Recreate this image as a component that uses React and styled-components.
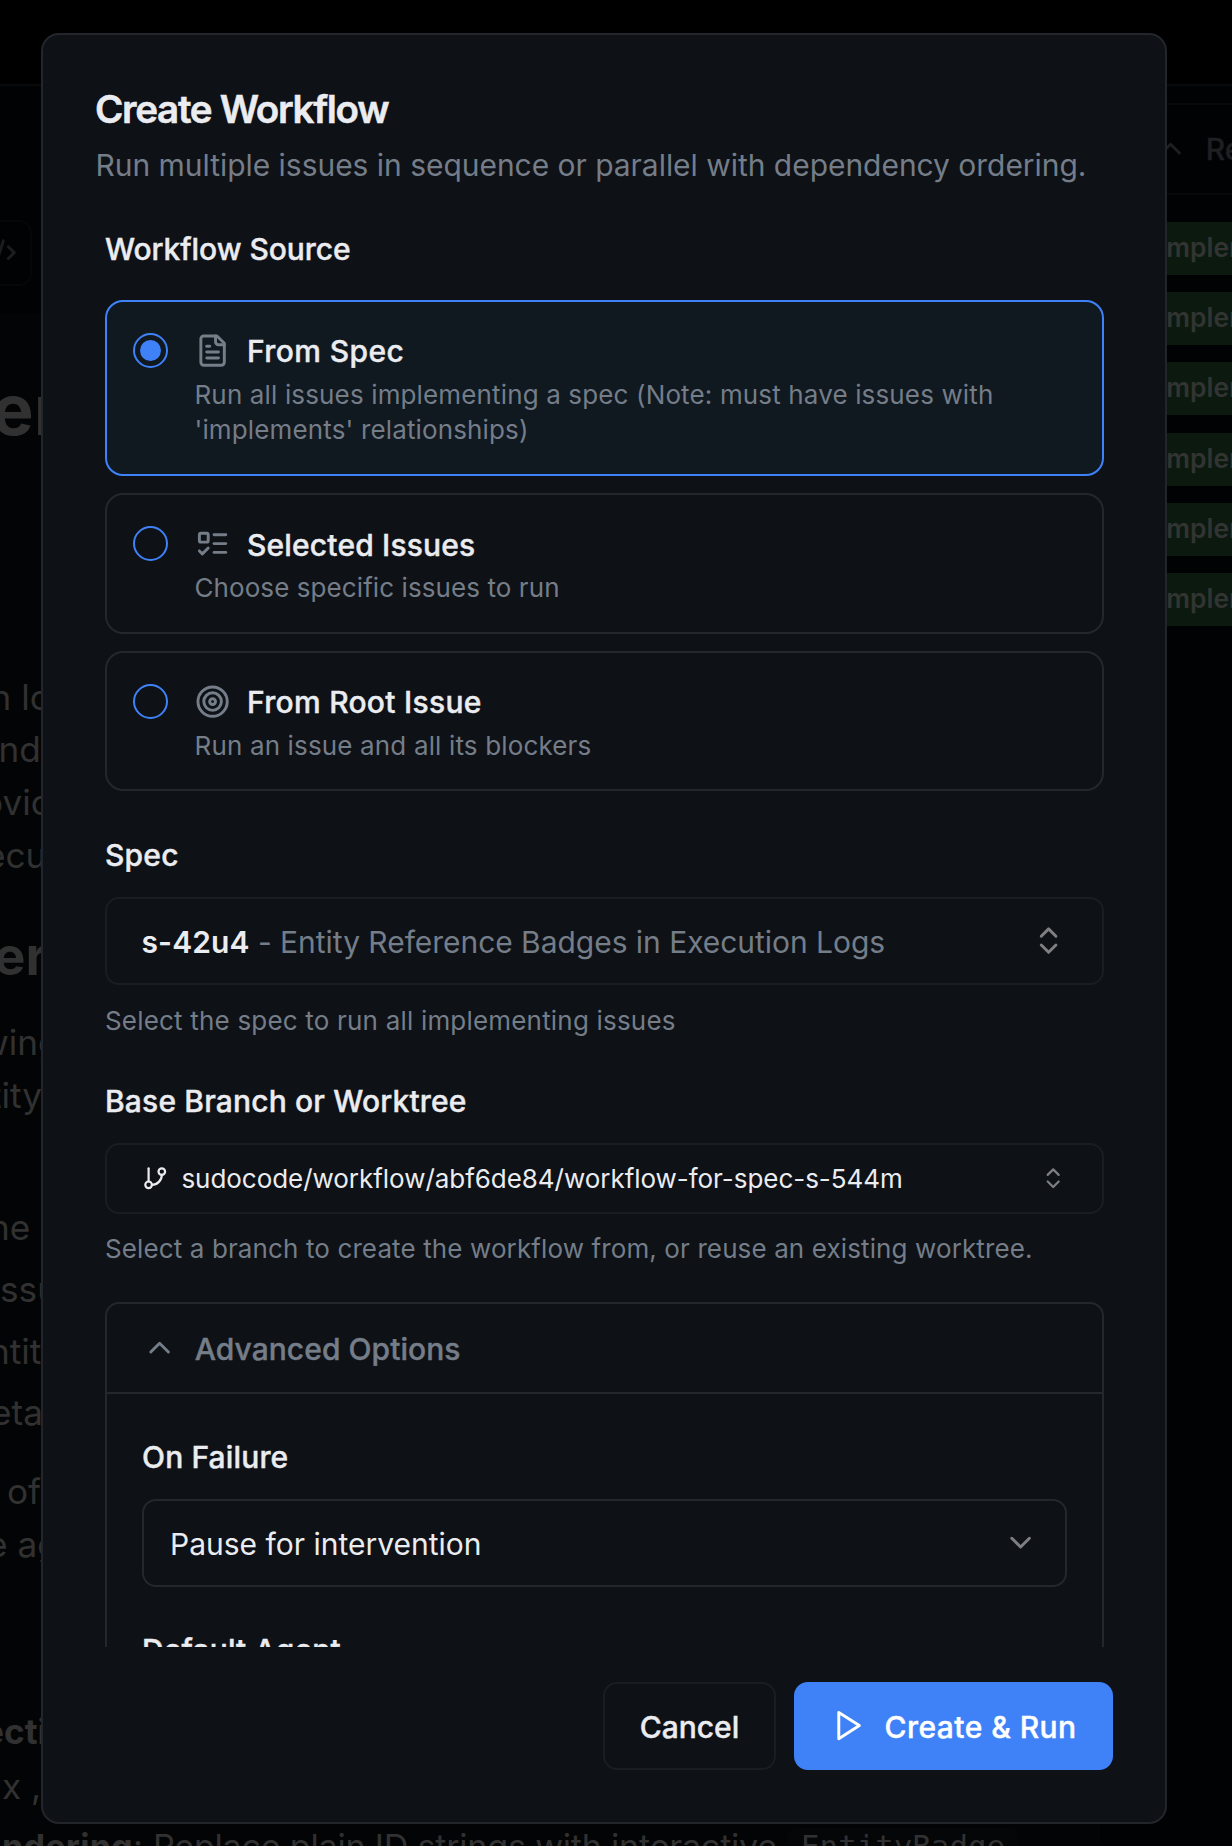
import React from "react";
import styled, { createGlobalStyle, css } from "styled-components";

const colors = {
  surface: "#0e1116",
  selected: "#101820",
  border: "#24272c",
  faint: "#1a1d22",
  text: "#ebecf0",
  muted: "#747d88",
  blue: "#3f82f8",
  ghost: "#313131",
};

const GlobalStyle = createGlobalStyle`
  *, *::before, *::after { box-sizing: border-box; }
  html, body { margin: 0; padding: 0; background: #010203; }
  body { font-family: Inter, "Liberation Sans", sans-serif; overflow: hidden; }
  button { font-family: inherit; }
  svg { flex: none; display: block; }
`;

const medium = css`
  font-weight: 500;
  -webkit-text-stroke: 0.4px currentColor;
`;

/* ---------- page behind the dialog ---------- */

const Page = styled.div`
  height: 1846px;
  overflow: hidden;
  display: flex;
  flex-direction: column;
  background: #010203;
`;

const TopBar = styled.div`
  height: 86px;
  flex: none;
  background: #000001;
  border-bottom: 2px solid #08090a;
`;

const Columns = styled.div`
  flex: 1;
  min-height: 0;
  display: flex;
  justify-content: space-between;
`;

const DocColumn = styled.div`
  width: 1100px;
  height: 1760px;
  overflow: hidden;
`;

const DocToolbar = styled.div`
  height: 227px;
  padding-top: 134px;
  background: #010203;
`;

const CodeToggle = styled.div`
  width: 64px;
  height: 66px;
  margin-left: -32.5px;
  padding-left: 12px;
  display: flex;
  align-items: center;
  border: 2px solid #060708;
  border-radius: 13px;
  color: #1d1d1d;
`;

const DocBody = styled.div`
  height: 1533px;
  padding-top: 1px;
  overflow: hidden;
  background: #030405;
`;

const DocLine = styled.div`
  height: 52px;
  margin-top: ${(p) => p.$gap}px;
  padding-left: 40px;
  text-indent: ${(p) => p.$x - 40}px;
  font-size: 35.2px;
  line-height: 52px;
  font-weight: ${(p) => (p.$bold ? 700 : 400)};
  color: ${colors.ghost};
  white-space: pre;
`;

const DocHeading = styled(DocLine)`
  height: ${(p) => p.$height}px;
  line-height: ${(p) => p.$height}px;
  font-size: ${(p) => p.$size}px;
  font-weight: 700;
`;

const DocRichLine = styled.div`
  display: flex;
  align-items: center;
  height: 52px;
  margin-top: 8px;
  font-size: 34.2px;
  letter-spacing: -0.26px;
  color: ${colors.ghost};
  white-space: pre;
`;

const Lead = styled.span`
  display: flex;
  justify-content: flex-end;
  width: 143px;
  margin-right: 10px;
  letter-spacing: 0.2px;
`;

const CodeChip = styled.code`
  margin-left: 11px;
  padding: 0 13px;
  border-radius: 8px;
  background: #050607;
  font: 30.8px "DejaVu Sans Mono", monospace;
  letter-spacing: 0;
`;

const SidePanel = styled.div`
  width: 92px;
  height: 545px;
  margin-top: 17px;
  border-top: 2px solid #08090a;
  overflow: hidden;
`;

const SideHeader = styled.div`
  height: 90px;
  padding-left: 13px;
  display: flex;
  align-items: center;
  gap: 17.5px;
  border-bottom: 2px solid #08090a;
  font-size: 30px;
  ${medium}
  color: #1e1f20;
`;

const BadgeList = styled.div`
  display: flex;
  flex-direction: column;
  gap: 17.2px;
  padding-top: 27px;
`;

const Badge = styled.div`
  height: 53px;
  padding-left: 19px;
  line-height: 51.6px;
  background: #0c190e;
  color: #313432;
  font-size: 26.4px;
  font-weight: 600;
`;

/* ---------- dialog ---------- */

const Overlay = styled.div`
  position: fixed;
  inset: 0;
  padding: 33px 65px 22px 41px;
`;

const Dialog = styled.div`
  width: 1126px;
  height: 1791px;
  padding: 50px 52px 0 52px;
  display: flex;
  flex-direction: column;
  background: ${colors.surface};
  border: 2px solid #22252c;
  border-radius: 18px;
  color: ${colors.text};
`;

const Title = styled.h2`
  margin: 0;
  font-size: 38.6px;
  line-height: 48px;
  font-weight: 600;
  letter-spacing: -1.33px;
  -webkit-text-stroke: 0.5px currentColor;
`;

const Description = styled.p`
  margin: 10px 0 0;
  padding-left: 0.5px;
  font-size: 30px;
  line-height: 44px;
  letter-spacing: -0.035px;
  color: ${colors.muted};
  white-space: nowrap;
`;

const ScrollBody = styled.div`
  height: 1460px;
  flex: none;
  padding: 40px 9px 0 10px;
  overflow: hidden;
`;

const Label = styled.div`
  height: 44px;
  margin-top: ${(p) => p.$gap || 0}px;
  font-size: 30px;
  line-height: 44px;
  letter-spacing: ${(p) => p.$track || 0}px;
  ${medium}
`;

const Hint = styled.div`
  height: 36px;
  margin-top: ${(p) => p.$gap}px;
  font-size: 26px;
  line-height: 38px;
  letter-spacing: ${(p) => p.$track}px;
  color: ${colors.muted};
  white-space: nowrap;
`;

const OptionList = styled.div`
  display: flex;
  flex-direction: column;
  gap: 17px;
  margin-top: 29px;
`;

const OptionCard = styled.div`
  height: ${(p) => p.$height}px;
  display: flex;
  gap: 26.5px;
  padding: 26.5px 26px;
  border: 2px solid ${(p) => (p.$active ? colors.blue : colors.border)};
  background: ${(p) => (p.$active ? colors.selected : "transparent")};
  border-radius: 18px;
`;

const Radio = styled.span`
  width: 35px;
  height: 35px;
  flex: none;
  margin-top: 4.5px;
  display: flex;
  align-items: center;
  justify-content: center;
  border: 2px solid ${colors.blue};
  border-radius: 50%;
  ${(p) =>
    p.$checked &&
    css`
      &::after {
        content: "";
        width: 21px;
        height: 21px;
        border-radius: 50%;
        background: ${colors.blue};
      }
    `}
`;

const OptionHead = styled.div`
  display: flex;
  align-items: center;
  gap: 17.3px;
  height: 44px;
  color: ${colors.muted};
`;

const OptionTitle = styled.span`
  padding-top: ${(p) => p.$drop}px;
  font-size: 30px;
  line-height: 44px;
  ${medium}
  letter-spacing: ${(p) => p.$track}px;
  color: ${colors.text};
`;

const OptionText = styled.div`
  margin-top: 4.5px;
  font-size: 26px;
  line-height: 35px;
  letter-spacing: ${(p) => p.$track}px;
  color: ${colors.muted};
`;

const Combo = styled.button`
  width: 100%;
  height: ${(p) => p.$height}px;
  margin: ${(p) => p.$gap}px 0 0;
  padding: 0 36px 0 ${(p) => p.$left}px;
  display: flex;
  align-items: center;
  border: 2px solid ${colors.faint};
  border-radius: 14px;
  background: transparent;
  color: ${colors.text};
  font-size: ${(p) => p.$size}px;
  letter-spacing: -0.04px;
  text-align: left;
  white-space: pre;
`;

const ComboValue = styled.span`
  flex: 1;
  padding-top: ${(p) => p.$drop ?? 2}px;
  margin-left: ${(p) => p.$left || 0}px;
  b { font-weight: 600; letter-spacing: 0.1px; }
`;

const Dim = styled.span`
  color: ${colors.muted};
`;

const Half = styled.span`
  color: #7d7f82;
`;

const Advanced = styled.section`
  height: 600px;
  margin-top: 36px;
  border: 2px solid ${colors.border};
  border-radius: 14px;
`;

const AdvancedHead = styled.div`
  height: 90px;
  padding-left: 35px;
  display: flex;
  align-items: center;
  gap: 17.5px;
  border-bottom: 2px solid ${colors.border};
  color: ${colors.muted};
  font-size: 30px;
  line-height: 44px;
  letter-spacing: 0.05px;
  ${medium}
  span { padding-top: 2px; }
`;

const AdvancedBody = styled.div`
  padding: 40.5px 35px 0;
`;

const Select = styled(Combo)`
  border-color: ${colors.border};
  padding-right: 27px;
  letter-spacing: 0;
`;

const Footer = styled.div`
  margin-top: 35px;
  display: flex;
  justify-content: flex-end;
  gap: 18px;
`;

const Button = styled.button`
  width: ${(p) => p.$width}px;
  height: 88px;
  padding: 0;
  display: flex;
  align-items: center;
  justify-content: center;
  gap: 19px;
  border: 2px solid ${(p) => (p.$primary ? colors.blue : colors.faint)};
  border-radius: 14px;
  background: ${(p) => (p.$primary ? colors.blue : "transparent")};
  color: ${(p) => (p.$primary ? "#fff" : colors.text)};
  font-size: 30px;
  ${medium}
  letter-spacing: ${(p) => (p.$primary ? 0.45 : 0)}px;
  span { padding-top: 2px; }
`;

/* ---------- icons ---------- */

const Icon = ({ size = 35.2, children }) => (
  <svg
    width={size}
    height={size}
    viewBox="0 0 24 24"
    fill="none"
    stroke="currentColor"
    strokeWidth="2"
    strokeLinecap="round"
    strokeLinejoin="round"
  >
    {children}
  </svg>
);

const FileTextIcon = () => (
  <Icon>
    <path d="M15 2H6a2 2 0 0 0-2 2v16a2 2 0 0 0 2 2h12a2 2 0 0 0 2-2V7Z" />
    <path d="M14 2v4a2 2 0 0 0 2 2h4" />
    <path d="M10 9H8" />
    <path d="M16 13H8" />
    <path d="M16 17H8" />
  </Icon>
);

const ListTodoIcon = () => (
  <Icon>
    <rect x="3" y="5" width="6" height="6" rx="1" />
    <path d="m3 17 2 2 4-4" />
    <path d="M13 6h8" />
    <path d="M13 12h8" />
    <path d="M13 18h8" />
  </Icon>
);

const TargetIcon = () => (
  <Icon>
    <circle cx="12" cy="12" r="10" />
    <circle cx="12" cy="12" r="6" />
    <circle cx="12" cy="12" r="2" />
  </Icon>
);

const UpDownIcon = ({ size }) => (
  <Icon size={size}>
    <path d="m7 15 5 5 5-5" />
    <path d="m7 9 5-5 5 5" />
  </Icon>
);

const BranchIcon = () => (
  <Icon size={26.4}>
    <path d="M6 3v12" />
    <circle cx="18" cy="6" r="3" />
    <circle cx="6" cy="18" r="3" />
    <path d="M18 9a9 9 0 0 1-9 9" />
  </Icon>
);

const ChevronUpIcon = () => (
  <Icon>
    <path d="m18 15-6-6-6 6" />
  </Icon>
);

const ChevronDownIcon = () => (
  <Icon>
    <path d="m6 9 6 6 6-6" />
  </Icon>
);

const PlayIcon = () => (
  <Icon>
    <path d="m6 3 14 9-14 9Z" />
  </Icon>
);

const CodeIcon = () => (
  <Icon>
    <path d="m18 16 4-4-4-4" />
    <path d="m6 8-4 4 4 4" />
    <path d="m14.5 4-5 16" />
  </Icon>
);

/* ---------- content ---------- */

const options = [
  {
    title: "From Spec",
    track: 0.42,
    drop: 1,
    text: "Run all issues implementing a spec (Note: must have issues with 'implements' relationships)",
    textTrack: 0.14,
    icon: <FileTextIcon />,
    height: 176,
    active: true,
  },
  {
    title: "Selected Issues",
    track: 0.17,
    drop: 3,
    text: "Choose specific issues to run",
    textTrack: 0.08,
    icon: <ListTodoIcon />,
    height: 141,
  },
  {
    title: "From Root Issue",
    track: 0.29,
    drop: 1,
    text: "Run an issue and all its blockers",
    textTrack: 0.15,
    icon: <TargetIcon />,
    height: 140,
  },
];

const Backdrop = () => (
  <Page>
    <TopBar />
    <Columns>
      <DocColumn>
        <DocToolbar>
          <CodeToggle>
            <CodeIcon />
          </CodeToggle>
        </DocToolbar>
        <DocBody>
          <DocHeading $gap={56} $height={80} $size={70} $x={-8}>er</DocHeading>
          <DocLine $gap={221} $x={-9.5}>n lo</DocLine>
          <DocLine $gap={0} $x={-1.5}>nd</DocLine>
          <DocLine $gap={1} $x={-18}>ovic</DocLine>
          <DocLine $gap={1} $x={-15}>ecu</DocLine>
          <DocHeading $gap={45} $height={60} $size={52.8} $x={-6}>er</DocHeading>
          <DocLine $gap={30} $x={-20}>wing</DocLine>
          <DocLine $gap={1} $x={-10}>tity</DocLine>
          <DocLine $gap={80} $x={-11}>he</DocLine>
          <DocLine $gap={10} $x={0}>ssu</DocLine>
          <DocLine $gap={10} $x={-11}>ntit</DocLine>
          <DocLine $gap={9} $x={-9}>eta</DocLine>
          <DocLine $gap={27} $x={7}>of</DocLine>
          <DocLine $gap={1} $x={-13}>e ag</DocLine>
          <DocLine $gap={135} $x={-17} $bold>ecti</DocLine>
          <DocLine $gap={3} $x={2}>x ,</DocLine>
          <DocRichLine>
            <Lead>
              <b>ndering</b>:
            </Lead>
            Replace plain ID strings with interactive
            <CodeChip>EntityBadge</CodeChip>
          </DocRichLine>
        </DocBody>
      </DocColumn>
      <SidePanel>
        <SideHeader>
          <ChevronUpIcon />
          Re
        </SideHeader>
        <BadgeList>
          {[0, 1, 2, 3, 4, 5].map((i) => (
            <Badge key={i}>Implements</Badge>
          ))}
        </BadgeList>
      </SidePanel>
    </Columns>
  </Page>
);

export default function App() {
  return (
    <>
      <GlobalStyle />
      <Backdrop />
      <Overlay>
        <Dialog role="dialog">
          <Title>Create Workflow</Title>
          <Description>
            Run multiple issues in sequence or parallel with dependency ordering.
          </Description>
          <ScrollBody>
            <Label $track={-0.06}>Workflow Source</Label>
            <OptionList>
              {options.map((o) => (
                <OptionCard key={o.title} $height={o.height} $active={o.active}>
                  <Radio $checked={o.active} />
                  <div>
                    <OptionHead>
                      {o.icon}
                      <OptionTitle $track={o.track} $drop={o.drop}>{o.title}</OptionTitle>
                    </OptionHead>
                    <OptionText $track={o.textTrack}>{o.text}</OptionText>
                  </div>
                </OptionCard>
              ))}
            </OptionList>

            <Label $gap={42} $track={0.2}>Spec</Label>
            <Combo $height={88} $gap={20} $left={34.5} $size={30}>
              <ComboValue>
                <b>s-42u4</b>
                <Dim> - Entity Reference Badges in Execution Logs</Dim>
              </ComboValue>
              <Half>
                <UpDownIcon />
              </Half>
            </Combo>
            <Hint $gap={17} $track={0.19}>Select the spec to run all implementing issues</Hint>

            <Label $gap={41} $track={0.16}>Base Branch or Worktree</Label>
            <Combo $height={71} $gap={20} $left={35} $size={26}>
              <BranchIcon />
              <ComboValue $left={13} $drop={0}>
                sudocode/workflow/abf6de84/workflow-for-spec-s-544m
              </ComboValue>
              <Half>
                <UpDownIcon size={26.4} />
              </Half>
            </Combo>
            <Hint $gap={16} $track={0.115}>
              Select a branch to create the workflow from, or reuse an existing worktree.
            </Hint>

            <Advanced>
              <AdvancedHead>
                <ChevronUpIcon />
                <span>Advanced Options</span>
              </AdvancedHead>
              <AdvancedBody>
                <Label $track={0.14}>On Failure</Label>
                <Select $height={88} $gap={20.5} $left={26} $size={30}>
                  <ComboValue>Pause for intervention</ComboValue>
                  <Half>
                    <ChevronDownIcon />
                  </Half>
                </Select>
                <Label $gap={41} $track={0.14}>Default Agent</Label>
              </AdvancedBody>
            </Advanced>
          </ScrollBody>
          <Footer>
            <Button $width={173}>
              <span>Cancel</span>
            </Button>
            <Button $width={319} $primary>
              <PlayIcon />
              <span>Create &amp; Run</span>
            </Button>
          </Footer>
        </Dialog>
      </Overlay>
    </>
  );
}
